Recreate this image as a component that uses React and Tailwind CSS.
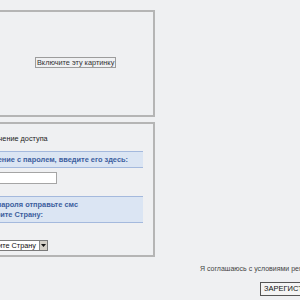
export default function App() {
  return (
    <div className="w-[300px] h-[300px] overflow-hidden bg-[#eff0f2] font-['Liberation_Sans',Arial,sans-serif] text-[#333]">
      <div className="pt-[10px] -ml-[60px] w-[215px]">
        {/* picture placeholder */}
        <div className="h-[107px] border-2 border-[#b5b5b5] flex items-center">
          <span className="ml-[93px] mb-[2px] border border-[#9c9c9c] px-[1px] text-[7.3px] leading-[9px] text-[#333] whitespace-nowrap">
            Включите эту картинку
          </span>
        </div>

        {/* access form */}
        <div className="mt-[5px] h-[135px] border-2 border-[#b5b5b5] pl-[4px] pr-[10px] pt-[10px]">
          <div className="pl-[28px] text-[7.3px] leading-[10px] text-[#222] whitespace-nowrap">Ограничение доступа</div>
          <div className="mt-[7px] h-[17px] bg-[#dbe5f3] border-y border-[#a4b9dd] flex items-center justify-end pr-[15px] text-[7.4px] font-bold text-[#3d5e9e] whitespace-nowrap overflow-hidden">
            Если Вы получили сообщение с паролем, введите его здесь:
          </div>
          <div className="mt-[4px] h-[12px] w-[111px] bg-white border border-[#a5a5a5]" />
          <div className="mt-[12px] h-[27px] bg-[#dbe5f3] border-y border-[#a4b9dd] pt-[3px] text-[7.4px] leading-[10px] font-bold text-[#3d5e9e] whitespace-nowrap overflow-hidden">
            <div className="flex justify-end pr-[65px]">Для получения пароля отправьте смс</div>
            <div className="flex justify-end pr-[100px]">Выберите Страну:</div>
          </div>
          <div className="mt-[17px] flex items-center">
            <div className="h-[11px] w-[102px] bg-white border border-[#7a7a7a] flex items-center justify-end">
              <span className="text-[7.3px] leading-[9px] text-[#111] pr-[3px] whitespace-nowrap">Выберите Страну</span>
              <span className="w-[8px] h-[9px] bg-[#d4d0c8] border-l border-[#888] flex items-center justify-center">
                <svg width="5" height="3" viewBox="0 0 5 3"><path d="M0 0h5L2.5 3z" fill="#111" /></svg>
              </span>
            </div>
          </div>
        </div>
      </div>

      <div className="mt-[7px] pl-[200px] text-[7px] leading-[9px] text-[#444] whitespace-nowrap">
        Я соглашаюсь с условиями регистрации
      </div>
      <div className="mt-[1px] pl-[260px] whitespace-nowrap">
        <button className="h-[14px] px-[3px] bg-[#f4f4f4] border border-[#555] text-[7.5px] leading-[10px] text-[#111]">
          ЗАРЕГИСТРИРОВАТЬСЯ
        </button>
      </div>
    </div>
  );
}
